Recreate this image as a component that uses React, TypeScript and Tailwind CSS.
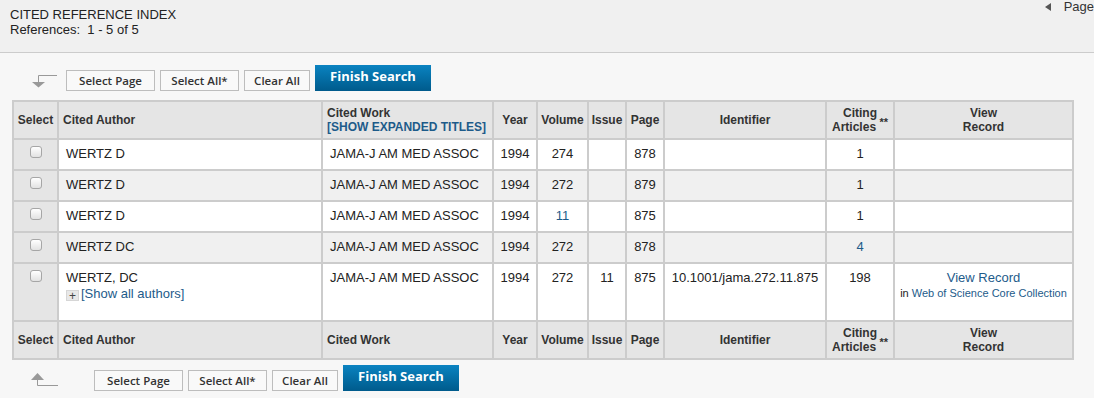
import React from "react";

const link = "text-[#1d5b8a]";
const cell = "border-2 border-[#cccccc] pt-[6px] pb-[7px] align-top";
const head = "border-2 border-[#cccccc] bg-[#e5e5e5] py-[4px] align-middle text-[12px] font-bold leading-[14px] text-[#333]";

type Row = {
	author: React.ReactNode;
	volume: React.ReactNode;
	issue?: string;
	page: string;
	identifier?: string;
	citing: React.ReactNode;
	view?: boolean;
	shaded?: boolean;
};

const rows: Row[] = [
	{ author: "WERTZ D", volume: "274", page: "878", citing: "1" },
	{ author: "WERTZ D", volume: "272", page: "879", citing: "1", shaded: true },
	{ author: "WERTZ D", volume: <span className={link}>11</span>, page: "875", citing: "1" },
	{ author: "WERTZ DC", volume: "272", page: "878", citing: <span className={link}>4</span>, shaded: true },
	{
		author: (
			<div className="min-h-[43px]">
				<div>WERTZ, DC</div>
				<div className="flex items-center">
					<span className="mr-[2px] mt-[3px] flex h-[11px] w-[13px] items-center justify-center border border-[#d6d6d6] bg-[#e8e8e8] text-[12px] leading-none text-[#444]">
						+
					</span>
					<span className={link}>[Show all authors]</span>
				</div>
			</div>
		),
		volume: "272",
		issue: "11",
		page: "875",
		identifier: "10.1001/jama.272.11.875",
		citing: "198",
		view: true,
	},
];

function Checkbox() {
	return <div className="mx-auto h-[12px] w-[12px] rounded-[3px] border border-[#a6a6a6] bg-linear-to-b from-white to-[#e2e2e2]" />;
}

function Toolbar({ up }: { up?: boolean }) {
	return (
		<div className={`flex items-end pl-[30px] ${up ? "mt-[5px]" : "pt-[12px]"}`}>
			{up ? (
				<svg width="28" height="14" viewBox="0 0 28 14" className="mb-[4px]">
					<polygon points="1,7 14,7 7.5,0" fill="#999" />
					<path d="M7.5 6V12.5H28" stroke="#999" strokeWidth="1" fill="none" />
				</svg>
			) : (
				<svg width="28" height="14" viewBox="0 0 28 14" className="mb-[3px]">
					<path d="M8.5 1.5H27M8.5 1.5V8" stroke="#999" strokeWidth="1" fill="none" />
					<polygon points="2,8 15,8 8.5,13.5" fill="#999" />
				</svg>
			)}
			<div className={`flex items-end gap-[5px] font-['Open_Sans',sans-serif] ${up ? "ml-[36px]" : "ml-[8px]"}`}>
				<button className="h-[21px] w-[89px] border border-[#bdbdbd] bg-[#f9f9f9] text-[11.5px] font-semibold text-[#333]">Select Page</button>
				<button className="h-[21px] w-[79px] border border-[#bdbdbd] bg-[#f9f9f9] text-[11.5px] font-semibold text-[#333]">Select All*</button>
				<button className="h-[21px] w-[66px] border border-[#bdbdbd] bg-[#f9f9f9] text-[11.5px] font-semibold text-[#333]">Clear All</button>
				<button className="h-[26px] w-[116px] bg-linear-to-b from-[#0b83c1] to-[#005b8c] pb-[3px] text-[13px] font-bold text-white">Finish Search</button>
			</div>
		</div>
	);
}

function HeaderRow({ expanded }: { expanded?: boolean }) {
	return (
		<tr>
			<th className={`${head} text-center`}>Select</th>
			<th className={`${head} pl-[4px] text-left`}>Cited Author</th>
			<th className={`${head} pl-[4px] text-left`}>
				Cited Work
				{expanded && (
					<>
						<br />
						<span className={link}>[SHOW EXPANDED TITLES]</span>
					</>
				)}
			</th>
			<th className={`${head} text-center`}>Year</th>
			<th className={`${head} text-center`}>Volume</th>
			<th className={`${head} text-center`}>Issue</th>
			<th className={`${head} text-center`}>Page</th>
			<th className={`${head} text-center`}>Identifier</th>
			<th className={`${head} text-center`}>
				Citing
				<br />
				Articles <sup className="text-[11px]">**</sup>
			</th>
			<th className={`${head} text-center`}>
				View
				<br />
				Record
			</th>
		</tr>
	);
}

export default function App() {
	return (
		<div className="min-h-screen bg-[#f7f7f7] font-['Liberation_Sans',Arial,sans-serif]">
			<div className="flex h-[53px] items-start justify-between border-b border-[#cccccc] bg-[#f0f0f0] pl-[10px] pt-[7px] text-[13px] leading-[15px] text-[#222]">
				<div>
					<div>CITED REFERENCE INDEX</div>
					<div>References:&nbsp; 1 - 5 of 5</div>
				</div>
				<div className="-mt-[8px] flex items-center gap-[13px] text-[#333]">
					<span className="h-0 w-0 border-y-[4.5px] border-r-[6px] border-y-transparent border-r-[#555]" />
					<span>Page</span>
				</div>
			</div>

			<Toolbar />

			<table className="ml-[12px] mt-[9px] w-[1060px] table-fixed border-collapse border-2 border-[#cccccc] text-[13px] leading-[16px] text-[#222]">
				<colgroup>
					<col className="w-[45px]" />
					<col className="w-[264px]" />
					<col className="w-[171px]" />
					<col className="w-[44px]" />
					<col className="w-[51px]" />
					<col className="w-[38px]" />
					<col className="w-[38px]" />
					<col className="w-[162px]" />
					<col className="w-[68px]" />
					<col className="w-[179px]" />
				</colgroup>
				<thead>
					<HeaderRow expanded />
				</thead>
				<tbody>
					{rows.map((r, i) => (
						<tr key={i} className={r.shaded ? "bg-[#f0f0f0]" : "bg-white"}>
							<td className={`${cell} bg-[#e5e5e5]`}>
								<Checkbox />
							</td>
							<td className={`${cell} pl-[7px]`}>{r.author}</td>
							<td className={`${cell} pl-[7px]`}>JAMA-J AM MED ASSOC</td>
							<td className={`${cell} text-center`}>1994</td>
							<td className={`${cell} text-center`}>{r.volume}</td>
							<td className={`${cell} text-center`}>{r.issue}</td>
							<td className={`${cell} text-center`}>{r.page}</td>
							<td className={`${cell} text-center`}>{r.identifier}</td>
							<td className={`${cell} text-center`}>{r.citing}</td>
							<td className={`${cell} text-center`}>
								{r.view && (
									<>
										<div className={link}>View Record</div>
										<div className="text-[11px] leading-[14px]">
											in <span className={link}>Web of Science Core Collection</span>
										</div>
									</>
								)}
							</td>
						</tr>
					))}
					<HeaderRow />
				</tbody>
			</table>

			<Toolbar up />
		</div>
	);
}
